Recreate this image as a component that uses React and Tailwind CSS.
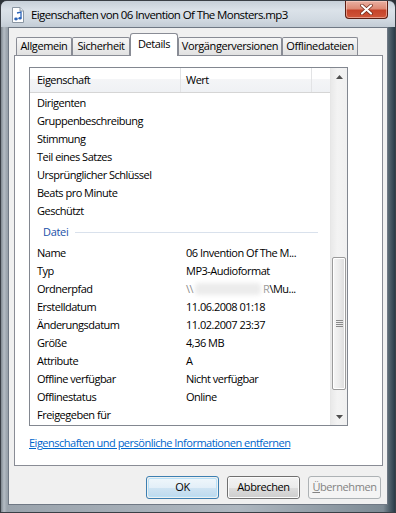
import React from "react";

const FONT = "[font-family:'Open_Sans','Noto_Sans',sans-serif]";

function Row({ name, children }) {
  return (
    <div className="flex h-[18px] items-center text-[11px] tracking-[-0.5px] text-black">
      <div className="w-[151px] shrink-0 pl-[7px] whitespace-nowrap">{name}</div>
      <div className="pl-[5px] whitespace-nowrap flex items-center">{children}</div>
    </div>
  );
}

function Tab({ label, w, selected }) {
  if (selected) {
    return (
      <div
        className={`relative z-10 -mb-px h-[23px] ${w} shrink-0 rounded-t-[3px] border border-b-0 border-[#898c95] bg-white flex items-start justify-center pt-[2px] text-[11px] tracking-[-0.4px] text-black`}
      >
        {label}
      </div>
    );
  }
  return (
    <div
      className={`h-[18px] ${w} shrink-0 rounded-t-[2px] border border-b-0 border-[#898c95] bg-[linear-gradient(180deg,#f7f7f7_0%,#ececec_50%,#e1e1e1_100%)] flex items-center justify-center text-[11px] tracking-[-0.4px] text-black`}
    >
      {label}
    </div>
  );
}

function Btn({ children, kind }) {
  if (kind === "default") {
    return (
      <div className="h-[23px] w-[73px] rounded-[3px] border border-[#3c7fb1] p-px">
        <div className="h-full w-full rounded-[2px] border border-[#b9e1f7] bg-[linear-gradient(180deg,#eef6fb_0%,#e3eff8_50%,#cfe4f3_51%,#bfdbef_100%)] flex items-center justify-center text-[11px] tracking-[-0.4px] text-black">
          {children}
        </div>
      </div>
    );
  }
  if (kind === "disabled") {
    return (
      <div className="h-[23px] w-[73px] rounded-[3px] border border-[#adb2b5] bg-[#f4f4f4] flex items-center justify-center text-[11px] tracking-[-0.4px] text-[#838383]">
        {children}
      </div>
    );
  }
  return (
    <div className="h-[23px] w-[73px] rounded-[3px] border border-[#707070] p-0">
      <div className="h-full w-full rounded-[2px] border border-[#fbfbfb] bg-[linear-gradient(180deg,#f2f2f2_0%,#ebebeb_50%,#dddddd_51%,#cfcfcf_100%)] flex items-center justify-center text-[11px] tracking-[-0.4px] text-black">
        {children}
      </div>
    </div>
  );
}

export default function App() {
  const top = [
    "Dirigenten",
    "Gruppenbeschreibung",
    "Stimmung",
    "Teil eines Satzes",
    "Ursprünglicher Schlüssel",
    "Beats pro Minute",
    "Geschützt",
  ];

  return (
    <div className={`${FONT} w-[396px] h-[513px] overflow-hidden bg-[#2c3238]`}>
      <div className="flex h-full w-full flex-col rounded-t-[7px] border border-[#3a3f46] bg-[linear-gradient(90deg,#7f8890_0px,#b4bcc4_3px,#9aa3ac_6px,#aeb7c0_60%,#7d8a94_97%,#2a3c48_100%)]">
        {/* title bar */}
        <div className="relative flex h-[26px] shrink-0 items-start rounded-t-[6px] bg-[linear-gradient(180deg,#c6cfd8_0%,#dbe2e9_35%,#d2dae2_70%,#c3ccd5_100%)]">
          <svg width="14" height="16" viewBox="0 0 14 16" className="ml-[10px] mt-[6px]">
            <path d="M1.5 0.5 H9 L12.5 4 V15.5 H1.5 Z" fill="#ffffff" stroke="#8a96a3" />
            <path d="M9 0.5 V4 H12.5" fill="#e6ebf0" stroke="#8a96a3" />
            <path d="M6 6 L10 5 V11" stroke="#2a63b8" strokeWidth="1.3" fill="none" />
            <ellipse cx="5" cy="12" rx="1.8" ry="1.4" fill="#2a63b8" />
            <ellipse cx="9" cy="11.2" rx="1.6" ry="1.2" fill="#2a63b8" />
          </svg>
          <div className="ml-[6px] mt-[6px] text-[11.5px] leading-[16px] tracking-[-0.6px] text-black whitespace-nowrap">
            Eigenschaften von 06 Invention Of The Monsters.mp3
          </div>
          <div className="ml-auto mr-[7px] h-[18px] w-[43px] rounded-b-[4px] border border-t-0 border-[#5b1d12] bg-[linear-gradient(180deg,#e9b0a2_0%,#dd8a75_45%,#c5432a_55%,#d0563a_100%)] flex items-center justify-center shadow-[inset_0_0_0_1px_rgba(255,220,210,0.5)]">
            <svg width="13" height="11" viewBox="0 0 13 11">
              <path d="M2 1.5 L11 9.5 M11 1.5 L2 9.5" stroke="#6a2414" strokeWidth="3.6" strokeLinecap="round" />
              <path d="M2 1.5 L11 9.5 M11 1.5 L2 9.5" stroke="#ffffff" strokeWidth="2.2" strokeLinecap="round" />
            </svg>
          </div>
        </div>

        {/* client */}
        <div className="mx-[7px] mb-[7px] flex flex-1 flex-col border border-[#6f7884] bg-[#f0f0f0] pt-[5px] pl-[5px] pr-[4px]">
          {/* tabs */}
          <div className="flex h-[22px] shrink-0 items-end pl-[2px]">
            <Tab label="Allgemein" w="w-[56px]" />
            <Tab label="Sicherheit" w="w-[58px]" />
            <Tab label="Details" w="w-[48px]" selected />
            <Tab label="Vorgängerversionen" w="w-[104px]" />
            <Tab label="Offlinedateien" w="w-[76px]" />
          </div>

          {/* panel */}
          <div className="h-[411px] w-[369px] shrink-0 border border-[#898c95] bg-white pl-[14px] pt-[11px]">
            {/* list view */}
            <div className="flex h-[359px] w-[319px] border border-[#828790] bg-white">
              <div className="flex w-[300px] flex-col">
                {/* header */}
                <div className="flex h-[25px] shrink-0 items-center border-b border-[#d5d5d5] bg-[linear-gradient(180deg,#ffffff_0%,#ffffff_45%,#f4f5f7_46%,#eff1f4_100%)] text-[11px] tracking-[-0.5px] text-black">
                  <div className="flex h-full w-[151px] items-center border-r border-[#e2e3e5] pl-[7px]">Eigenschaft</div>
                  <div className="flex h-full w-[131px] items-center border-r border-[#e2e3e5] pl-[5px]">Wert</div>
                </div>
                {/* body */}
                <div className="flex flex-col pt-[1px]">
                  {top.map((t) => (
                    <Row key={t} name={t} />
                  ))}
                  <div className="flex h-[24px] items-center pl-[13px] pr-[12px]">
                    <span className="text-[11px] tracking-[-0.3px] text-[#2150a8]">Datei</span>
                    <div className="ml-[7px] h-px flex-1 bg-[#d9e1ec]" />
                  </div>
                  <Row name="Name">06 Invention Of The M...</Row>
                  <Row name="Typ">MP3-Audioformat</Row>
                  <Row name="Ordnerpfad">
                    <span className="text-[#8a8a8a]">\\</span>
                    <span className="mx-[2px] inline-block h-[12px] w-[66px] rounded-[4px] bg-[#ececec] blur-[2px]" />
                    <span className="text-[#9a9a9a]">R</span>
                    <span>\Mu...</span>
                  </Row>
                  <Row name="Erstelldatum">11.06.2008 01:18</Row>
                  <Row name="Änderungsdatum">11.02.2007 23:37</Row>
                  <Row name="Größe">4,36 MB</Row>
                  <Row name="Attribute">A</Row>
                  <Row name="Offline verfügbar">Nicht verfügbar</Row>
                  <Row name="Offlinestatus">Online</Row>
                  <Row name="Freigegeben für" />
                </div>
              </div>
              {/* scrollbar */}
              <div className="flex w-[17px] flex-col border-l border-[#e6e6e6] bg-[linear-gradient(90deg,#e9e9e9_0%,#f3f3f3_40%,#f0f0f0_100%)]">
                <div className="flex h-[17px] shrink-0 items-center justify-center">
                  <svg width="7" height="4" viewBox="0 0 7 4">
                    <path d="M0 4 L3.5 0 L7 4 Z" fill="#4f4f4f" />
                  </svg>
                </div>
                <div className="h-[172px] shrink-0" />
                <div className="mx-[1px] flex h-[133px] shrink-0 items-center justify-center rounded-[2px] border border-[#9b9b9b] bg-[linear-gradient(90deg,#f6f6f6_0%,#ececec_50%,#dcdcdc_100%)] shadow-[inset_0_0_0_1px_#ffffff]">
                  <div className="flex flex-col gap-[1px]">
                    <div className="h-px w-[7px] bg-[#8a8a8a]" />
                    <div className="h-px w-[7px] bg-[#8a8a8a]" />
                    <div className="h-px w-[7px] bg-[#8a8a8a]" />
                    <div className="h-px w-[7px] bg-[#8a8a8a]" />
                  </div>
                </div>
                <div className="h-[18px] shrink-0" />
                <div className="flex h-[17px] shrink-0 items-center justify-center">
                  <svg width="7" height="4" viewBox="0 0 7 4">
                    <path d="M0 0 L7 0 L3.5 4 Z" fill="#4f4f4f" />
                  </svg>
                </div>
              </div>
            </div>
            <div className="mt-[9px] h-[16px] text-[11px] leading-[16px] tracking-[-0.5px] text-[#0066cc] underline whitespace-nowrap">
              Eigenschaften und persönliche Informationen entfernen
            </div>
          </div>

          {/* buttons */}
          <div className="mt-[10px] flex justify-end gap-[8px] pr-[2px]">
            <Btn kind="default">OK</Btn>
            <Btn>Abbrechen</Btn>
            <Btn kind="disabled">
              <span>
                <span className="underline">Ü</span>bernehmen
              </span>
            </Btn>
          </div>
        </div>
      </div>
    </div>
  );
}
